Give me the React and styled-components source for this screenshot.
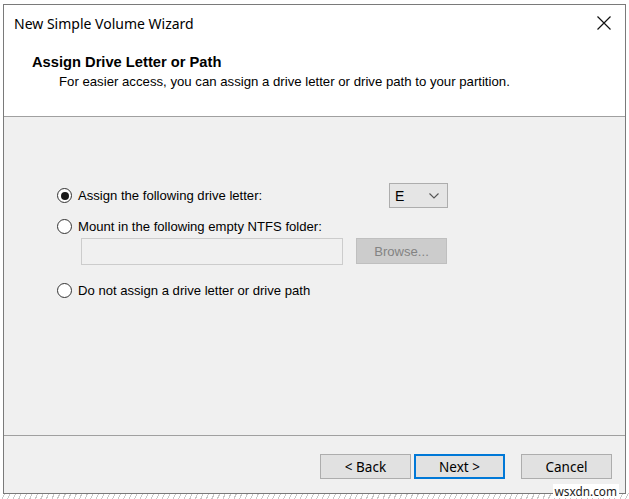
import React from 'react';
import styled, { createGlobalStyle } from 'styled-components';

const Global = createGlobalStyle`
  html, body {
    margin: 0;
    padding: 0;
    background: #ffffff;
  }
  body {
    font-family: "Liberation Sans", Arial, sans-serif;
    color: #000;
  }
`;

const Page = styled.div`
  width: 629px;
  height: 499px;
  position: relative;
  overflow: hidden;
  box-sizing: border-box;
  padding: 4px 0 0 3px;
  background:
    repeating-linear-gradient(115deg, #ffffff 0 4px, #c8c8c8 4px 5px) bottom / 100% 6px no-repeat,
    #ffffff;
`;

const Window = styled.div`
  width: 623px;
  height: 490px;
  box-sizing: border-box;
  border: 1px solid #7a7a7a;
  background: #f0f0f0;
  display: flex;
  flex-direction: column;
`;

const TitleBar = styled.div`
  height: 36px;
  flex-shrink: 0;
  background: #fff;
  display: flex;
  align-items: center;
  justify-content: space-between;
  padding: 0 12px 0 10px;
  font-family: "Noto Sans", "Open Sans", sans-serif;
  font-size: 14px;
  color: #000;
`;

const CloseButton = styled.div`
  width: 18px;
  height: 18px;
  display: flex;
  align-items: center;
  justify-content: center;
`;

const Header = styled.div`
  height: 76px;
  flex-shrink: 0;
  background: #fff;
  border-bottom: 1px solid #a0a0a0;
  box-sizing: border-box;
  padding: 13px 0 0 28px;
`;

const HeaderTitle = styled.div`
  font-weight: bold;
  font-size: 14.7px;
  line-height: 17px;
`;

const HeaderSub = styled.div`
  margin: 3px 0 0 27px;
  font-size: 13.2px;
  line-height: 16px;
`;

const Body = styled.div`
  flex: 1;
  padding: 66px 0 0 53px;
  display: flex;
  flex-direction: column;
  border-bottom: 1px solid #a0a0a0;
  font-size: 13.1px;
`;

const Row = styled.div`
  width: 391px;
  height: ${p => p.$h || 25}px;
  margin-top: ${p => p.$top || 0}px;
  display: flex;
  align-items: center;
  justify-content: space-between;
`;

const RadioLabel = styled.label`
  display: flex;
  align-items: center;
  gap: 6px;
`;

const Radio = styled.span`
  width: 15px;
  height: 15px;
  box-sizing: border-box;
  border: 1px solid #333;
  border-radius: 50%;
  background: #fff;
  display: flex;
  align-items: center;
  justify-content: center;
  &::after {
    content: '';
    width: 8px;
    height: 8px;
    border-radius: 50%;
    background: ${p => (p.$checked ? '#1a1a1a' : 'transparent')};
  }
`;

const Select = styled.div`
  width: 59px;
  height: 25px;
  box-sizing: border-box;
  border: 1px solid #adadad;
  background: #e5e5e5;
  display: flex;
  align-items: center;
  justify-content: space-between;
  padding: 0 8px 0 5px;
  font-size: 14px;
`;

const FolderRow = styled.div`
  display: flex;
  gap: 13px;
  margin: 2px 0 0 24px;
  height: 27px;
`;

const TextField = styled.div`
  width: 262px;
  height: 27px;
  box-sizing: border-box;
  border: 1px solid #cccccc;
  background: #f0f0f0;
`;

const DisabledButton = styled.div`
  width: 91px;
  height: 26px;
  box-sizing: border-box;
  border: 1px solid #bfbfbf;
  background: #cccccc;
  color: #838383;
  display: flex;
  align-items: center;
  justify-content: center;
`;

const Footer = styled.div`
  height: 57px;
  flex-shrink: 0;
  display: flex;
  justify-content: flex-end;
  align-items: flex-start;
  padding: 18px 13px 0 0;
  box-sizing: border-box;
  gap: 3px;
`;

const Button = styled.div`
  width: 91px;
  height: 25px;
  box-sizing: border-box;
  border: ${p => (p.$primary ? '2px solid #0078d7' : '1px solid #adadad')};
  background: #e1e1e1;
  display: flex;
  align-items: center;
  justify-content: center;
  font-family: "Noto Sans", "Open Sans", sans-serif;
  font-size: 13.5px;
  margin-left: ${p => p.$gap || 0}px;
`;

const Watermark = styled.div`
  position: absolute;
  right: 10px;
  bottom: 1px;
  font-family: "Noto Sans", sans-serif;
  font-size: 11.8px;
  line-height: 14px;
  color: #222;
  background: #fff;
  padding: 0 2px;
`;

const Chevron = () => (
  <svg width="10" height="6" viewBox="0 0 10 6">
    <path d="M0.5 0.5 L5 5 L9.5 0.5" fill="none" stroke="#555" strokeWidth="1.1" />
  </svg>
);

const CloseIcon = () => (
  <svg width="14" height="14" viewBox="0 0 14 14">
    <path d="M0.5 0.5 L13.5 13.5 M13.5 0.5 L0.5 13.5" stroke="#111" strokeWidth="1.2" />
  </svg>
);

export default function App() {
  return (
    <>
      <Global />
      <Page>
        <Window>
          <TitleBar>
            <span>New Simple Volume Wizard</span>
            <CloseButton><CloseIcon /></CloseButton>
          </TitleBar>
          <Header>
            <HeaderTitle>Assign Drive Letter or Path</HeaderTitle>
            <HeaderSub>For easier access, you can assign a drive letter or drive path to your partition.</HeaderSub>
          </Header>
          <Body>
            <Row>
              <RadioLabel><Radio $checked />Assign the following drive letter:</RadioLabel>
              <Select>E<Chevron /></Select>
            </Row>
            <Row $h={20} $top={8}>
              <RadioLabel><Radio />Mount in the following empty NTFS folder:</RadioLabel>
            </Row>
            <FolderRow>
              <TextField />
              <DisabledButton>Browse...</DisabledButton>
            </FolderRow>
            <Row $h={20} $top={15}>
              <RadioLabel><Radio />Do not assign a drive letter or drive path</RadioLabel>
            </Row>
          </Body>
          <Footer>
            <Button>&lt; Back</Button>
            <Button $primary>Next &gt;</Button>
            <Button $gap={13}>Cancel</Button>
          </Footer>
        </Window>
        <Watermark>wsxdn.com</Watermark>
      </Page>
    </>
  );
}
